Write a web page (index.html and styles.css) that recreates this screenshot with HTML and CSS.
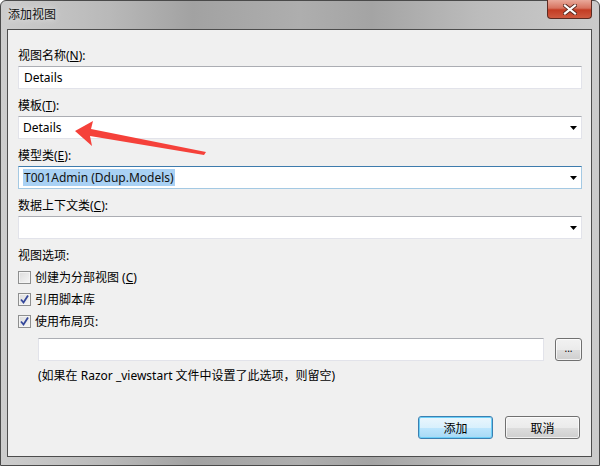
FILE: index.html
```html
<!DOCTYPE html>
<html lang="zh-CN">
<head>
  <meta charset="UTF-8" />
  <title>添加视图</title>
  <link rel="stylesheet" href="styles.css">
</head>
<body>
  <div class="window">
    <div class="titlebar">
      <span class="title">添加视图</span>
      <div class="close">
        <svg width="14" height="11" viewBox="0 0 14 11">
          <path d="M2 1.5 L12 9.5 M12 1.5 L2 9.5" stroke="#5a2a20" stroke-width="4" stroke-linecap="square"/>
          <path d="M2 1.5 L12 9.5 M12 1.5 L2 9.5" stroke="#ffffff" stroke-width="2.2" stroke-linecap="square"/>
        </svg>
      </div>
    </div>

    <div class="client">
      <div class="lbl">视图名称(<u>N</u>):</div>
      <div class="field">Details</div>

      <div class="lbl">模板(<u>T</u>):</div>
      <div class="field combo">
        <span>Details</span>
        <svg class="caret" width="7" height="4" viewBox="0 0 7 4"><polygon points="0,0 7,0 3.5,4" fill="#000"/></svg>
      </div>

      <div class="lbl">模型类(<u>E</u>):</div>
      <div class="field combo focused">
        <span class="sel">T001Admin (Ddup.Models)</span>
        <svg class="caret" width="7" height="4" viewBox="0 0 7 4"><polygon points="0,0 7,0 3.5,4" fill="#000"/></svg>
      </div>

      <div class="lbl">数据上下文类(<u>C</u>):</div>
      <div class="field combo">
        <span></span>
        <svg class="caret" width="7" height="4" viewBox="0 0 7 4"><polygon points="0,0 7,0 3.5,4" fill="#000"/></svg>
      </div>

      <div class="lbl options">视图选项:</div>
      <div class="check-row">
        <span class="box"></span>
        <span>创建为分部视图 (<u>C</u>)</span>
      </div>
      <div class="check-row">
        <span class="box">
          <svg width="11" height="11" viewBox="0 0 11 11"><path d="M2 5.5 L4.5 8.5 L9 1.5" fill="none" stroke="#34479a" stroke-width="1.8"/></svg>
        </span>
        <span>引用脚本库</span>
      </div>
      <div class="check-row">
        <span class="box">
          <svg width="11" height="11" viewBox="0 0 11 11"><path d="M2 5.5 L4.5 8.5 L9 1.5" fill="none" stroke="#34479a" stroke-width="1.8"/></svg>
        </span>
        <span>使用布局页:</span>
      </div>

      <div class="layout-row">
        <div class="field layout-input"></div>
        <div class="btn browse">...</div>
      </div>
      <div class="note">(如果在 Razor _viewstart 文件中设置了此选项，则留空)</div>

      <div class="actions">
        <div class="btn primary">添加</div>
        <div class="btn">取消</div>
      </div>
    </div>

    <!-- red annotation arrow -->
    <svg class="arrow" width="140" height="40" viewBox="0 0 140 40">
      <polygon points="0,10 18,0 16,8 131,31 129,34 15,15 17,25" fill="#f5413a"/>
    </svg>
  </div>
</body>
</html>
```

FILE: styles.css
```css
* {
  box-sizing: border-box;
}
body {
  margin: 0;
  font-family: "Noto Sans", "Noto Sans CJK SC", sans-serif;
  font-size: 12px;
  color: #000;
  background: #fff;
}
.window {
  position: relative;
  width: 600px;
  height: 466px;
  border: 1px solid #4a4a4a;
  border-radius: 6px 6px 0 0;
  background: linear-gradient(to right, #cdcdcd 0%, #b9b9b9 18%, #a2a2a2 32%, #aeaeae 50%, #a4a4a4 62%, #bcbcbc 80%, #cbcbcb 100%);
  padding: 0 7px 8px 6px;
  display: flex;
  flex-direction: column;
}
.titlebar {
  height: 28px;
  display: flex;
  align-items: flex-start;
  justify-content: space-between;
}
.title {
  margin: 6px 0 0 1px;
  font-size: 12px;
  line-height: 16px;
  color: #111;
  text-shadow: 0 0 6px rgba(255,255,255,0.8);
}
.close {
  width: 45px;
  height: 19px;
  margin-top: -1px;
  border: 1px solid #5c2b22;
  border-top: none;
  border-radius: 0 0 4px 4px;
  background: linear-gradient(to bottom, #e9a99a 0%, #d7735f 45%, #c33c23 55%, #cf5a40 100%);
  display: flex;
  align-items: center;
  justify-content: center;
}
.client {
  flex: 1;
  background: #f0f0f0;
  border: 1px solid #4d4d4d;
  padding: 18px 9px 0 10px;
  display: flex;
  flex-direction: column;
}
.lbl {
  height: 16px;
  line-height: 16px;
  margin-bottom: 2px;
}
.field {
  height: 23px;
  background: #fff;
  border: 1px solid #e2e3ea;
  border-top-color: #abadb3;
  padding: 0 5px;
  line-height: 21px;
  margin-bottom: 9px;
}
.combo {
  display: flex;
  align-items: center;
  justify-content: space-between;
  padding-left: 4px;
}
.combo .caret {
  margin-right: -1px;
}
.focused {
  border-color: #a4c9e3;
  border-top-color: #3d7bad;
}
.sel {
  background: #a9d1f4;
  color: #111;
  line-height: 17px;
  padding: 0 1px;
}
.options {
  margin-top: 0;
  margin-bottom: 2px;
}
.check-row {
  height: 22px;
  display: flex;
  align-items: center;
  gap: 4px;
}
.box {
  width: 13px;
  height: 13px;
  border: 1px solid #8e8f8f;
  background: linear-gradient(to bottom right, #dcdcdc, #f6f6f6);
  box-shadow: inset 0 0 0 1px #f4f4f4;
  display: flex;
  align-items: center;
  justify-content: center;
}
.layout-row {
  display: flex;
  align-items: flex-start;
  margin: 6px 0 0 20px;
  gap: 11px;
}
.layout-input {
  width: 506px;
  margin-bottom: 0;
}
.btn {
  height: 23px;
  width: 75px;
  border: 1px solid #707070;
  border-radius: 3px;
  background: linear-gradient(to bottom, #f2f2f2 0%, #ebebeb 50%, #dddddd 51%, #cfcfcf 100%);
  box-shadow: inset 0 0 0 1px rgba(255,255,255,0.7);
  display: flex;
  align-items: center;
  justify-content: center;
}
.browse {
  width: 27px;
  font-size: 10px;
  line-height: 10px;
  padding-bottom: 4px;
}
.primary {
  border-color: #3c7fb1;
  background: linear-gradient(to bottom, #eaf6fd 0%, #d9f0fc 50%, #bee6fd 51%, #a7d9f5 100%);
  box-shadow: inset 0 0 0 1px #6ccff7;
}
.note {
  margin: 7px 0 0 20px;
  height: 16px;
  line-height: 16px;
}
.actions {
  display: flex;
  justify-content: flex-end;
  gap: 12px;
  margin-top: 32px;
  padding-right: 2px;
}
.arrow {
  position: absolute;
  left: 74px;
  top: 120px;
}
```
